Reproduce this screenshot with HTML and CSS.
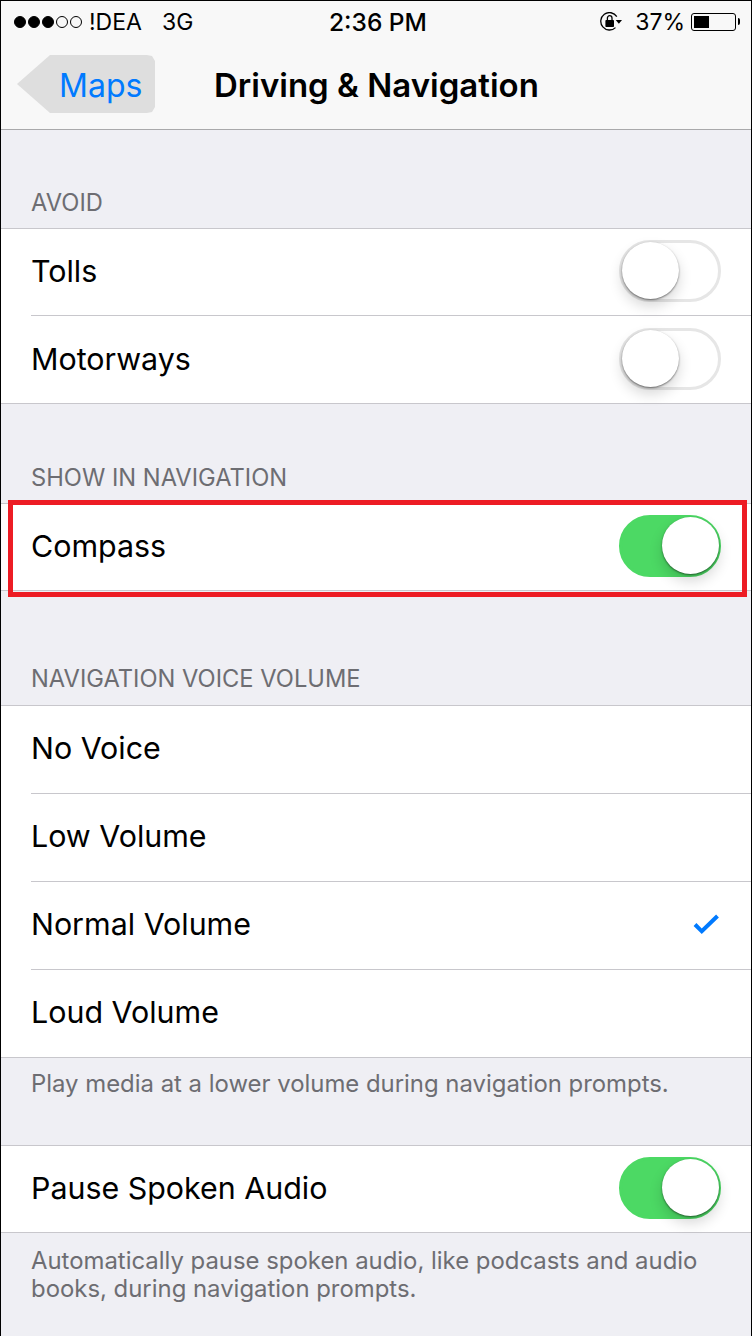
FILE: index.html
```html
<!DOCTYPE html>
<html lang="en">
<head>
    <meta charset="UTF-8">
    <title>Driving &amp; Navigation</title>
    <link rel="stylesheet" href="styles.css">
</head>
<body>
    <div class="phone">
        <header class="top-bar">
            <div class="status-bar">
                <div class="status-left">
                    <span class="signal">
                        <i class="dot"></i><i class="dot"></i><i class="dot"></i><i class="dot empty"></i><i class="dot empty"></i>
                    </span>
                    <span class="carrier">!DEA</span>
                    <span class="network">3G</span>
                </div>
                <div class="status-time">2:36 PM</div>
                <div class="status-right">
                    <svg class="lock-icon" width="22" height="19" viewBox="0 0 22 19">
                        <path d="M15.5 15.6A8.7 8.7 0 1 1 16.8 4.6" fill="none" stroke="#000" stroke-width="1.3"/>
                        <path d="M15.7 8H22l-3.1 3.8z" fill="#000"/>
                        <rect x="5.4" y="8" width="8.6" height="7" rx="0.8" fill="#000"/>
                        <path d="M7.4 8.4V6a2.3 2.3 0 0 1 4.6 0v2.4" fill="none" stroke="#000" stroke-width="1.3"/>
                    </svg>
                    <span class="battery-pct">37%</span>
                    <span class="battery"><span class="battery-level"></span></span>
                    <span class="battery-tip"></span>
                </div>
            </div>
            <div class="nav-bar">
                <a class="back-btn">Maps</a>
                <h1 class="nav-title">Driving &amp; Navigation</h1>
            </div>
        </header>

        <div class="section-label label-avoid">AVOID</div>
        <ul class="group">
            <li class="row short">Tolls<span class="toggle"></span></li>
            <li class="row">Motorways<span class="toggle"></span></li>
        </ul>

        <div class="section-label label-show">SHOW IN NAVIGATION</div>
        <ul class="group highlighted">
            <li class="row short">Compass<span class="toggle on"></span></li>
        </ul>

        <div class="section-label label-voice">NAVIGATION VOICE VOLUME</div>
        <ul class="group voice-group">
            <li class="row">No Voice</li>
            <li class="row">Low Volume</li>
            <li class="row">Normal Volume
                <svg class="check" width="28" height="22" viewBox="0 0 28 22">
                    <path d="M2 11.5l6.8 6.8L24.5 3" fill="none" stroke="#007aff" stroke-width="4"/>
                </svg>
            </li>
            <li class="row">Loud Volume</li>
        </ul>
        <p class="section-note note-volume">Play media at a lower volume during navigation prompts.</p>

        <ul class="group">
            <li class="row short">Pause Spoken Audio<span class="toggle on"></span></li>
        </ul>
        <p class="section-note">Automatically pause spoken audio, like podcasts and audio books, during navigation prompts.</p>
    </div>
</body>
</html>
```
FILE: styles.css
```css
html, body {
    margin: 0;
    padding: 0;
}
body {
    font-family: 'Inter', 'Liberation Sans', sans-serif;
    background-color: #efeff4;
    color: #000;
}
.phone {
    width: 752px;
    height: 1336px;
    box-sizing: border-box;
    border: 1px solid #000;
    border-bottom: none;
    position: relative;
    overflow: hidden;
}

/* Top bars */
.top-bar {
    height: 128px;
    background-color: #f8f8f8;
    border-bottom: 1px solid #a9a9ab;
}
.status-bar {
    height: 41px;
    display: flex;
    align-items: center;
    justify-content: space-between;
    font-size: 23px;
    padding: 0 11px 0 13px;
    position: relative;
}
.status-left {
    display: flex;
    align-items: center;
}
.signal {
    display: flex;
    gap: 2px;
    margin-right: 7px;
}
.dot {
    width: 12px;
    height: 12px;
    border-radius: 50%;
    background-color: #000;
    border: 1px solid #000;
    box-sizing: border-box;
}
.dot.empty {
    background-color: transparent;
}
.carrier {
    margin-right: 20px;
}
.status-time {
    position: absolute;
    left: 328px;
    font-size: 24.5px;
    font-weight: 500;
}
.status-right {
    display: flex;
    align-items: center;
    margin-left: auto;
}
.lock-icon {
    margin-right: 13px;
}
.battery-pct {
    margin-right: 6px;
}
.battery {
    width: 45px;
    height: 18px;
    box-sizing: border-box;
    border: 1px solid #000;
    border-radius: 3px;
    padding: 2px;
    display: flex;
}
.battery-level {
    width: 15px;
    background-color: #000;
}
.battery-tip {
    width: 2px;
    height: 7px;
    margin-left: 2px;
    background-color: #000;
    border-radius: 0 2px 2px 0;
}
.nav-bar {
    height: 87px;
    display: flex;
    align-items: center;
}
.back-btn {
    margin-left: 16px;
    margin-top: -3px;
    width: 138px;
    height: 58px;
    box-sizing: border-box;
    padding: 2px 0 0 42px;
    display: flex;
    align-items: center;
    font-size: 32px;
    color: #007aff;
    background-color: #dedede;
    clip-path: polygon(0 50%, 33px 0, 130px 0, 135px 1px, 138px 6px, 138px 52px, 135px 57px, 130px 58px, 33px 58px);
}
.nav-title {
    margin: -2px 0 0 59px;
    font-size: 33px;
    font-weight: 600;
}

/* Settings groups */
.section-label {
    font-size: 23.7px;
    line-height: 28px;
    color: #6d6d72;
    padding-left: 30px;
}
.label-avoid {
    padding-top: 59px;
    padding-bottom: 11px;
}
.label-show {
    padding-top: 60px;
    padding-bottom: 11px;
}
.label-voice {
    padding-top: 74px;
    padding-bottom: 12px;
}
.group {
    list-style: none;
    margin: 0;
    padding: 0;
    background-color: #fff;
    border-top: 1px solid #c8c7cc;
    border-bottom: 1px solid #c8c7cc;
}
.row {
    height: 88px;
    box-sizing: border-box;
    margin-left: 30px;
    padding-right: 30px;
    padding-bottom: 2px;
    font-size: 30.4px;
    display: flex;
    align-items: center;
    justify-content: space-between;
    border-bottom: 1px solid #c8c7cc;
}
.row.short {
    height: 87px;
}
.row:last-child {
    height: 87px;
    border-bottom: none;
}
.row.short:last-child {
    height: 86px;
}
.voice-group .row {
    padding-bottom: 4px;
}
.section-note {
    margin: 0;
    padding: 14px 30px 0 30px;
    font-size: 23.9px;
    line-height: 28px;
    color: #6d6d72;
}
.note-volume {
    height: 75px;
    padding-top: 12px;
}

/* Switch */
.toggle {
    width: 102px;
    height: 62px;
    box-sizing: border-box;
    border: 3px solid #e6e6e6;
    border-radius: 31px;
    background-color: #fff;
    position: relative;
}
.toggle::after {
    content: "";
    position: absolute;
    left: 0;
    top: -1px;
    width: 57px;
    height: 57px;
    border-radius: 50%;
    background-color: #fff;
    box-shadow: 0 7px 14px rgba(0, 0, 0, 0.16), 0 1px 2px rgba(0, 0, 0, 0.5);
}
.toggle.on {
    background-color: #4cd964;
    border-color: #4cd964;
}
.toggle.on::after {
    left: 40px;
}

/* Red annotation frame drawn over the row */
.highlighted::after {
    content: "";
    position: absolute;
    left: 7px;
    right: 4px;
    top: 499px;
    height: 97px;
    box-sizing: border-box;
    border: 5px solid #ed1c24;
}
```
